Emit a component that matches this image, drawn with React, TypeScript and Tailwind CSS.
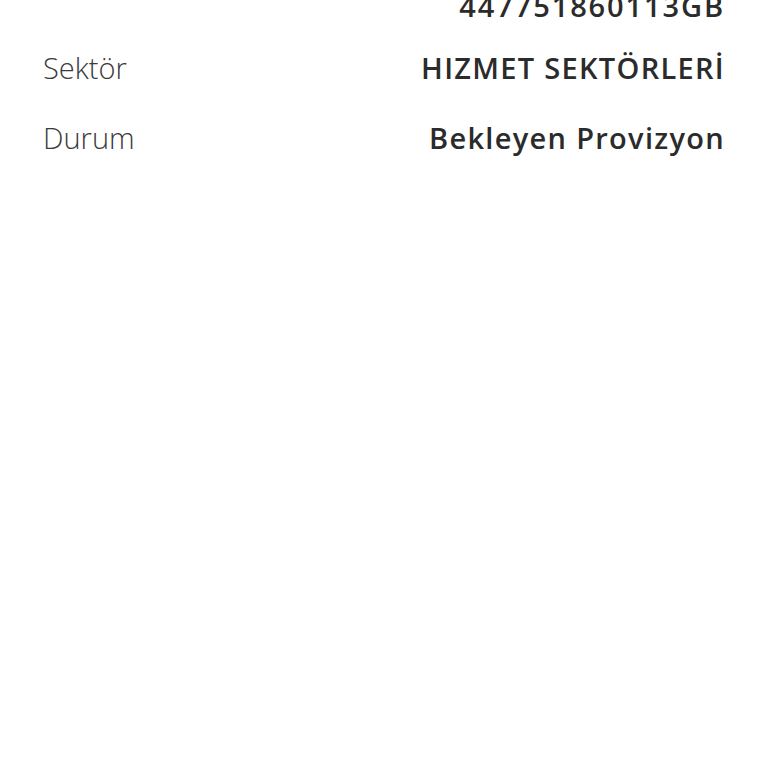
const rows = [
  { label: 'Sektör', value: 'HIZMET SEKTÖRLERİ' },
  { label: 'Durum', value: 'Bekleyen Provizyon' },
]

export default function App() {
  return (
    <div className="h-[768px] w-[768px] overflow-hidden bg-white font-['Open_Sans',sans-serif]">
      <div className="-mt-[21px] flex flex-col px-[43px]">
        {/* tail of the previous row, scrolled mostly out of view */}
        <div className="text-right text-[29px] font-semibold leading-[54px] tracking-[1.9px] text-[#2b2b2b]">
          447751860113GB
        </div>
        {rows.map((row) => (
          <div key={row.label} className="flex items-baseline justify-between leading-[70px]">
            <span className="text-[29px] font-light text-[#3a3a3a]">{row.label}</span>
            <span className="text-[29px] font-semibold tracking-[1.3px] text-[#2b2b2b]">{row.value}</span>
          </div>
        ))}
      </div>
    </div>
  )
}
